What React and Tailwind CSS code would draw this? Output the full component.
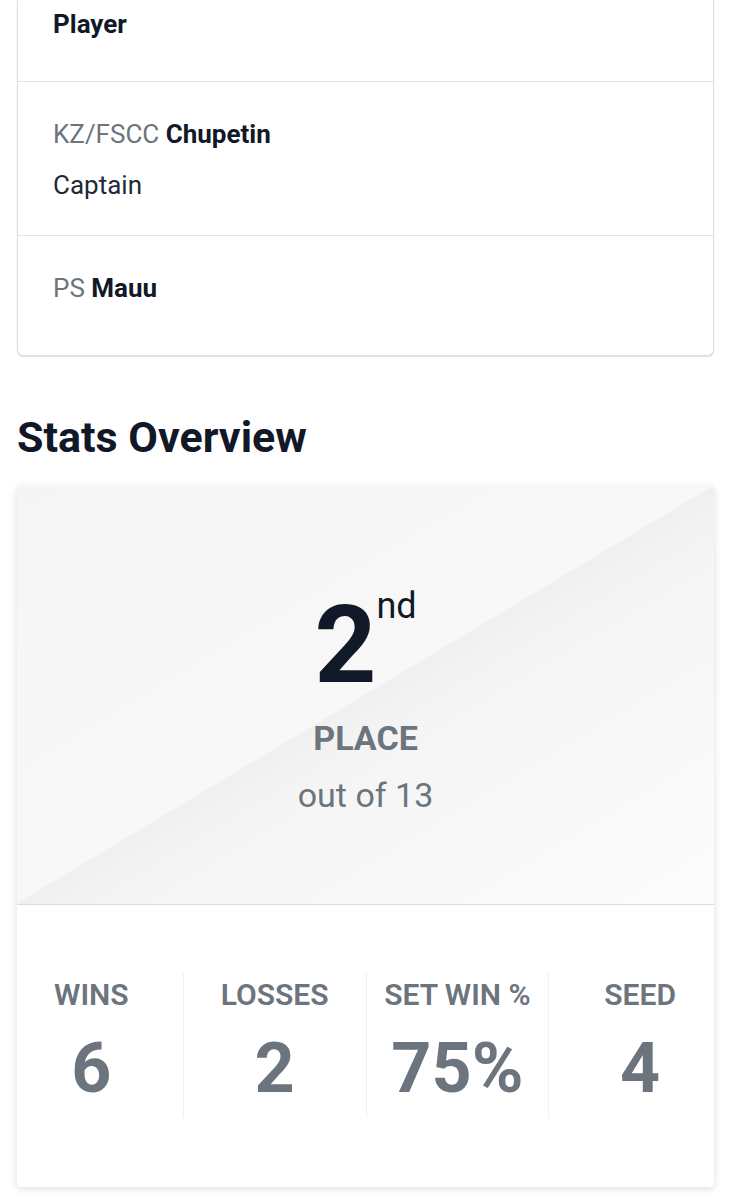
import React from "react";

const members = [
  { tag: null, name: null, role: "Player", first: true },
  { tag: "KZ/FSCC", name: "Chupetin", role: "Captain" },
  { tag: "PS", name: "Mauu", role: null, last: true },
];

const stats = [
  { label: "WINS", value: "6" },
  { label: "LOSSES", value: "2" },
  { label: "SET WIN %", value: "75%" },
  { label: "SEED", value: "4" },
];

const App = () => {
  return (
    <div className="min-h-[1200px] bg-white px-[17px] font-['Roboto',sans-serif] text-[#111827]">
      {/* Roster card (scrolled, top cut off) */}
      <div className="rounded-b-md border-x border-b border-[#dcdcdc] bg-white shadow-[0_1px_1px_rgba(0,0,0,0.12)]">
        {members.map((m, i) => (
          <div
            key={i}
            className={`px-[35px] text-[26px] leading-[36px] ${
              m.first
                ? "pt-[6px] pb-[39px] border-b border-[#e2e2e2]"
                : m.last
                  ? "pt-[34px] pb-[49px]"
                  : "pt-[34px] pb-[32px] border-b border-[#e2e2e2]"
            }`}
          >
            {m.name && (
              <div>
                <span className="text-[#6c757d]">{m.tag}</span>{" "}
                <span className="font-bold">{m.name}</span>
              </div>
            )}
            {m.role && (
              <div
                className={
                  m.first ? "font-bold" : "mt-[15px] text-[#1f2937]"
                }
              >
                {m.role}
              </div>
            )}
          </div>
        ))}
      </div>

      <h2 className="mt-[56px] text-[43px] font-bold leading-[1.2]">
        Stats Overview
      </h2>

      {/* Stats card */}
      <div className="mt-[22px] rounded-sm bg-white shadow-[0_2px_8px_rgba(0,0,0,0.13)]">
        <div className="flex flex-col items-center border-b border-[#dcdcdc] bg-[linear-gradient(to_bottom_right,#f5f5f5_0%,#f8f8f8_49.8%,#f0f0f0_50%,#f5f5f5_58%,#fcfcfc_100%)] pt-[105px] pb-[88px]">
          <div className="flex items-start">
            <span className="text-[108px] font-bold leading-none">2</span>
            <span className="-mt-[3px] text-[36px] leading-none">nd</span>
          </div>
          <div className="mt-[19px] text-[34px] font-bold leading-[1.2] text-[#6c757d]">
            PLACE
          </div>
          <div className="mt-[17px] text-[34px] leading-[1.2] text-[#6c757d]">
            out of 13
          </div>
        </div>

        <div className="pt-[68px] pb-[69px]">
          <div className="-mx-[17px] grid grid-cols-4">
            {stats.map((s, i) => (
              <div
                key={s.label}
                className={`flex h-[145px] flex-col items-center pt-[4px] text-[#6c757d] ${
                  i > 0 ? "border-l border-[#f0f0f0]" : ""
                }`}
              >
                <div className="text-[30px] font-semibold leading-[36px]">
                  {s.label}
                </div>
                <div className="mt-[13px] text-[70px] font-bold leading-[84px]">
                  {s.value}
                </div>
              </div>
            ))}
          </div>
        </div>
      </div>
    </div>
  );
};

export default App;
